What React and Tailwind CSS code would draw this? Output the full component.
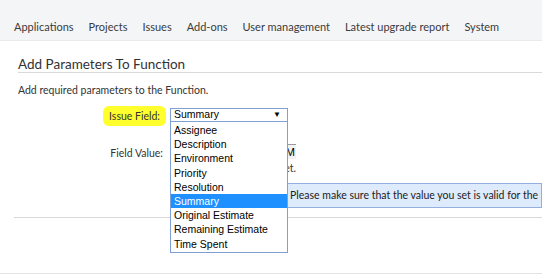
import React from 'react';

const navItems = ['Applications', 'Projects', 'Issues', 'Add-ons', 'User management', 'Latest upgrade report', 'System'];
const fields = ['Assignee', 'Description', 'Environment', 'Priority', 'Resolution', 'Summary', 'Original Estimate', 'Remaining Estimate', 'Time Spent'];

export default function App() {
  return (
    <div className="relative w-[542px] h-[274px] overflow-hidden bg-white text-[#333] font-['Lato',sans-serif]">
      {/* admin nav */}
      <div className="h-[41px] bg-[#f4f5f7] border-b border-[#e9eaec] flex items-center pt-[15px] px-[14px] gap-[15px] text-[11px] text-[#3b3b3b] whitespace-nowrap">
        {navItems.map(item => <span key={item}>{item}</span>)}
      </div>

      <div className="pl-[18px]">
        <h2 className="mt-[15px] h-[17px] leading-[16px] text-[13.5px] border-b border-[#d9d9d9]">Add Parameters To Function</h2>
        <p className="mt-[10px] text-[10.5px] leading-[14px]">Add required parameters to the Function.</p>

        {/* form */}
        <div className="mt-[11px] grid grid-cols-[145px_1fr] gap-x-[7px] text-[10.5px]">
          <div className="text-right leading-[16px] h-[16px]">
            <span className="inline-block bg-[#ffff2e] rounded-[6px] px-[6px] -mr-[3px] leading-[20px] -my-[2px]">Issue Field:</span>
          </div>
          <div className="h-[16px]">
            <div className="w-[118px] h-[14px] border border-[#7f9fd5] flex items-center justify-between pl-[3px] pr-[6px] font-['Liberation_Sans',Arial,sans-serif] text-[10.5px] text-black">
              <span>Summary</span>
              <span className="text-[8px]">▼</span>
            </div>
          </div>

          <div className="text-right mt-[21px] leading-[16px]">Field Value:</div>
          <div className="mt-[20px]">
            <div className="w-[126px] h-[15px] border-t border-[#9a9a9a] bg-[#f2f2f2] flex items-center justify-end pr-[1px] font-['Liberation_Sans',Arial,sans-serif] text-[11px] text-black">
              ITEM
            </div>
            <div className="w-[126px] text-right mt-[2px] leading-[14px] whitespace-nowrap overflow-hidden">Value to be set.</div>
          </div>
        </div>

        <div className="ml-[152px] mt-[8px] h-[25px] bg-[#deebfc] border border-[#93aee0] flex items-center pl-[119px] whitespace-nowrap overflow-hidden text-[10.5px] text-[#222]">
          Please make sure that the value you set is valid for the provided field.
        </div>

        <div className="mt-[9px] -ml-[4px] border-t border-[#d9d9d9]"></div>
      </div>

      <div className="absolute left-0 right-0 bottom-0 border-t border-[#e3e3e3]"></div>

      {/* open select list */}
      <div className="absolute left-[170px] top-[121px] w-[118px] border border-[#7f9fd5] bg-white py-px font-['Liberation_Sans',Arial,sans-serif] text-[10.5px] text-black">
        {fields.map(f => (
          <div
            key={f}
            className={f === 'Summary'
              ? 'h-[14.2px] leading-[14.2px] pl-[3px] bg-[#1e90ff] text-white'
              : 'h-[14.2px] leading-[14.2px] pl-[3px]'}
          >
            {f}
          </div>
        ))}
      </div>
    </div>
  );
}
